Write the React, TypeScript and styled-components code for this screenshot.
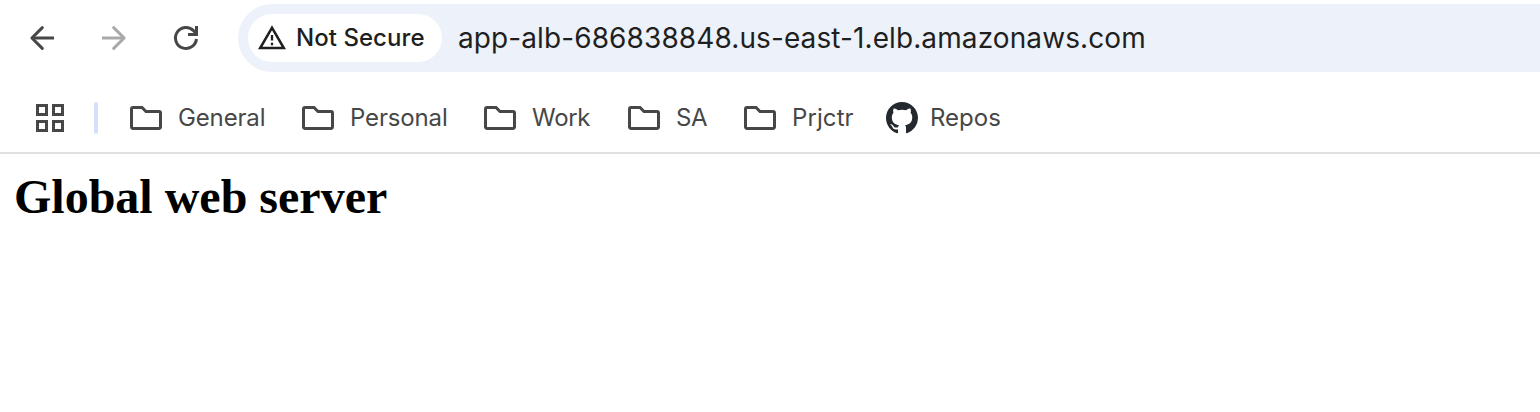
import React from "react";
import styled, { createGlobalStyle } from "styled-components";

const Global = createGlobalStyle`
  * { box-sizing: border-box; }
  body { margin: 0; background: #fff; overflow: hidden; }
`;
const Page = styled.div`
  width: 1540px;
  height: 412px;
  display: flex;
  flex-direction: column;
  background: #fff;
  font-family: Inter, Roboto, sans-serif;
  white-space: nowrap;
`;
const Toolbar = styled.div`
  height: 84px;
  padding: 4px 0 12px 26px;
  display: flex;
  align-items: center;
`;
const NavButton = styled.div<{ $dim?: boolean }>`
  width: 72px;
  height: 32px;
  color: ${(p) => (p.$dim ? "#a9a9aa" : "#474747")};
  svg { display: block; }
`;
const AddressBar = styled.div`
  flex: 1;
  height: 68px;
  margin-left: -4px;
  padding-left: 10px;
  display: flex;
  align-items: center;
  gap: 16px;
  background: #edf2fa;
  border-radius: 34px 0 0 34px;
  color: #1f1f1f;
`;
const Security = styled.div`
  width: 194px;
  height: 48px;
  padding-left: 8px;
  display: flex;
  align-items: center;
  gap: 8px;
  background: #fff;
  border-radius: 24px;
`;
const Label = styled.span<{ $size: number; $width: number; $weight?: number; $spacing?: number }>`
  width: ${(p) => p.$width}px;
  font-size: ${(p) => p.$size}px;
  font-weight: ${(p) => p.$weight ?? 400};
  letter-spacing: ${(p) => p.$spacing ?? 0}px;
  line-height: 32px;
`;
const Bookmarks = styled.div`
  height: 70px;
  padding-left: 34px;
  display: flex;
  align-items: center;
  border-bottom: 2px solid #dfe0e1;
  color: #474747;
`;
const Divider = styled.div`
  width: 4px;
  height: 32px;
  margin: 0 32px 0 28px;
  border-radius: 2px;
  background: #d4e1fc;
`;
const Bookmark = styled.div<{ $width: number; $gap?: number }>`
  width: ${(p) => p.$width}px;
  display: flex;
  align-items: center;
  gap: ${(p) => p.$gap ?? 16}px;
`;
const Content = styled.main`
  padding: 15px 14px;
`;
const Heading = styled.h1`
  margin: 0;
  font: bold 48px/56px "Liberation Serif", serif;
  color: #000;
`;

const Folder = () => (
  <svg width="32" height="32" fill="none" stroke="currentColor" strokeWidth="3">
    <path d="M3 5.500H12L16 9.500H29A1.500 1.500 0 0 1 30.500 11V25A1.500 1.500 0 0 1 29 26.500H3A1.500 1.500 0 0 1 1.500 25V7A1.500 1.500 0 0 1 3 5.500Z" />
  </svg>
);

const folders = [
  { name: "General", width: 172, text: 88, spacing: -0.15 },
  { name: "Personal", width: 182, text: 98, spacing: -0.15 },
  { name: "Work", width: 144, text: 58, spacing: -0.3 },
  { name: "SA", width: 116, text: 32, spacing: -0.3 },
  { name: "Prjctr", width: 142, text: 62, spacing: 0.1 },
];

export default function App() {
  return (
    <Page>
      <Global />
      <Toolbar>
        <NavButton>
          <svg width="32" height="32" fill="none" stroke="currentColor" strokeWidth="3">
            <path d="M28 16H6" />
            <path d="M16.300 5.600 5.900 16l10.400 10.400" strokeLinecap="round" strokeLinejoin="round" />
          </svg>
        </NavButton>
        <NavButton $dim>
          <svg width="32" height="32" fill="none" stroke="currentColor" strokeWidth="3">
            <path d="M4 16H26" />
            <path d="M15.700 5.600 26.100 16 15.700 26.400" strokeLinecap="round" strokeLinejoin="round" />
          </svg>
        </NavButton>
        <NavButton>
          <svg width="32" height="32" fill="none" stroke="currentColor" strokeWidth="3">
            <path d="M26.450 17A10.500 10.500 0 1 1 23.600 8.750L27 12.200M26.500 4V12.500H18" />
          </svg>
        </NavButton>
        <AddressBar>
          <Security>
            <svg width="32" height="32" fill="currentColor">
              <path
                transform="translate(.727 .6) scale(1.273)"
                d="M1 21h22L12 2 1 21Zm3.470-2L12 5.990 19.530 19H4.470ZM12.900 15.900h-1.800v1.900h1.800v-1.900Zm0-6.200h-1.800v4.400h1.800v-4.400Z"
              />
            </svg>
            <Label $size={24} $width={130} $weight={500} $spacing={0.05}>Not Secure</Label>
          </Security>
          <Label $size={28} $width={700} $spacing={0.1}>app-alb-686838848.us-east-1.elb.amazonaws.com</Label>
        </AddressBar>
      </Toolbar>
      <Bookmarks>
        <svg width="32" height="32" fill="none" stroke="currentColor" strokeWidth="3">
          <path d="M3.500 3.500h9v9h-9ZM19.500 3.500h9v9h-9ZM3.500 19.500h9v9h-9ZM19.500 19.500h9v9h-9Z" />
        </svg>
        <Divider />
        {folders.map((f) => (
          <Bookmark key={f.name} $width={f.width}>
            <Folder />
            <Label $size={24} $width={f.text} $spacing={f.spacing}>{f.name}</Label>
          </Bookmark>
        ))}
        <Bookmark $width={120} $gap={12}>
          <svg width="32" height="32" viewBox="0 0 16 16" fill="#24292f">
            <path d="M8 0C3.580 0 0 3.580 0 8c0 3.540 2.290 6.530 5.470 7.590.4.070.55-.17.55-.38 0-.19-.01-.82-.01-1.490-2.010.37-2.530-.49-2.690-.94-.09-.23-.48-.94-.82-1.130-.28-.15-.68-.52-.01-.53.63-.01 1.080.58 1.230.82.72 1.210 1.870.87 2.330.66.07-.52.28-.87.51-1.070-1.780-.2-3.640-.89-3.640-3.950 0-.87.31-1.590.82-2.150-.08-.2-.36-1.020.08-2.120 0 0 .67-.21 2.200.82.64-.18 1.320-.27 2-.27s1.360.09 2 .27c1.530-1.040 2.200-.82 2.200-.82.44 1.100.16 1.920.08 2.120.51.56.82 1.270.82 2.150 0 3.070-1.870 3.750-3.650 3.950.29.25.54.73.54 1.480 0 1.070-.01 1.930-.01 2.200 0 .21.15.46.55.38A8.010 8.010 0 0 0 16 8c0-4.420-3.580-8-8-8Z" />
          </svg>
          <Label $size={24} $width={72}>Repos</Label>
        </Bookmark>
      </Bookmarks>
      <Content><Heading>Global web server</Heading></Content>
    </Page>
  );
}
